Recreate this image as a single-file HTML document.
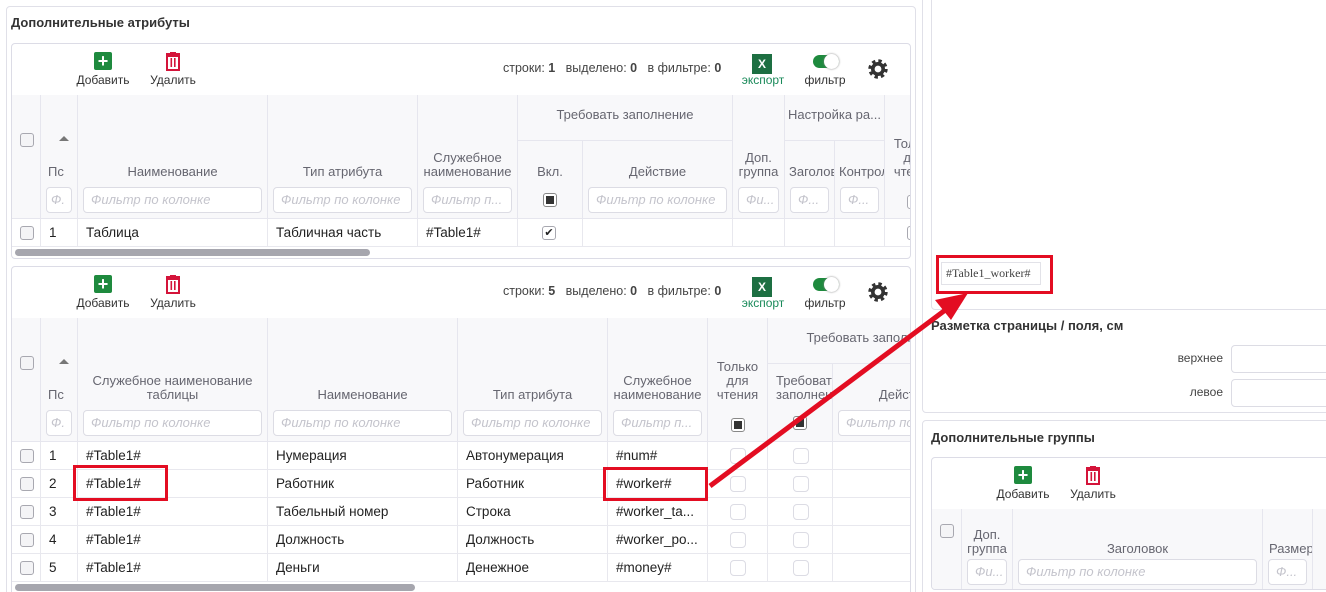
<!DOCTYPE html>
<html><head><meta charset="utf-8"><style>
*{margin:0;padding:0;box-sizing:border-box}
html,body{width:1326px;height:592px;overflow:hidden;background:#fff}
body{font-family:"Liberation Sans","DejaVu Sans",sans-serif;font-size:13px;color:#222}
#w{position:relative;width:1326px;height:592px;overflow:hidden}
.a{position:absolute}
.box{position:absolute;border:1px solid #dcdce6;border-radius:4px;overflow:hidden;background:#fff}
.h{position:absolute;background:#f8f8fa;border-right:1px solid #e6e6ee;border-bottom:1px solid #e6e6ee;overflow:hidden}
.lb{position:absolute;left:0;right:0;bottom:39px;text-align:center;color:#666670;font-size:13px;line-height:14px;white-space:nowrap}
.gl{position:absolute;left:0;right:0;top:0;line-height:40px;text-align:center;color:#666670;white-space:nowrap;overflow:hidden}
.f{position:absolute;left:5px;right:5px;bottom:5px;height:26px;border:1px solid #dcdce4;border-radius:4px;background:#fff;color:#c4c4cc;font-style:italic;font-size:13px;line-height:24px;padding-left:7px;white-space:nowrap;overflow:hidden}
.cb{position:absolute;width:14px;height:14px;border:1px solid #a8a8b0;border-radius:3px;background:#f4f4f6}
.cbf{position:absolute;width:14px;height:14px;border:1px solid #888;border-radius:3px;background:#fff}
.cbf::after{content:"";position:absolute;left:2px;top:2px;width:8px;height:8px;background:#333}
.eb{position:absolute;width:16px;height:16px;border:1px solid #dcdce4;border-radius:4px;background:#fff}
.d{position:absolute;border-right:1px solid #e8e8ee;border-bottom:1px solid #e8e8ee;padding-left:8px;line-height:27px;white-space:nowrap;overflow:hidden;background:#fff;font-size:13.5px}
.tl{position:absolute;width:80px;text-align:center;color:#333;font-size:12px}
.title{position:absolute;font-weight:bold;font-size:13px;color:#333}
.sc{position:absolute;height:7px;border-radius:4px;background:#a6a6ae}
.red{position:absolute;border:3px solid #e30d22}
</style></head><body><div id="w">

<div class="box" style="left:6px;top:6px;width:910px;height:600px;border-color:#e0e0e8"></div>
<div class="title" style="left:11px;top:15px">Дополнительные атрибуты</div>

<!-- TABLE 1 -->
<div class="box" style="left:11px;top:43px;width:900px;height:216px">
 <div class="a" style="left:82px;top:8px;width:18px;height:18px;background:#1e8a3e;border-radius:2px;color:#fff;font-size:18px;line-height:18px;text-align:center;font-weight:bold">+</div>
 <div class="tl" style="left:51px;top:29px">Добавить</div>
 <svg class="a" style="left:152px;top:8px" width="18" height="19" viewBox="0 0 18 19"><rect x="2" y="1" width="14" height="3" fill="#d4143a"/><rect x="6" y="0" width="6" height="2" fill="#d4143a"/><rect x="3" y="4" width="12" height="14" fill="none" stroke="#d4143a" stroke-width="2"/><rect x="6.5" y="6" width="1.6" height="9" fill="#d4143a"/><rect x="10" y="6" width="1.6" height="9" fill="#d4143a"/></svg>
 <div class="tl" style="left:121px;top:29px">Удалить</div>
 <div class="a" style="left:491px;top:17px;color:#444;line-height:14px;font-size:12.5px">строки: <b>1</b> &nbsp; выделено: <b>0</b> &nbsp; в фильтре: <b>0</b></div>
 <div class="a" style="left:740px;top:10px;width:20px;height:20px;background:#1d6f42;color:#fff;font-size:12px;font-weight:bold;line-height:20px;text-align:center">X</div>
 <div class="tl" style="left:711px;top:29px;color:#1a8a5a;font-size:12px">экспорт</div>
 <div class="a" style="left:801px;top:11px;width:26px;height:13px;background:#1e8a3e;border-radius:7px"><div class="a" style="right:0;top:-1px;width:15px;height:15px;background:#fff;border-radius:50%;box-shadow:0 0 2px #888"></div></div>
 <div class="tl" style="left:773px;top:29px">фильтр</div>
 <svg class="a" style="left:856px;top:15px" width="20" height="20" viewBox="0 0 20 20"><circle cx="10" cy="10" r="8" fill="none" stroke="#333" stroke-width="3.4" stroke-dasharray="3.3 3"/><circle cx="10" cy="10" r="5.2" fill="none" stroke="#333" stroke-width="3.6"/></svg>

 <div class="h" style="left:0;top:51px;width:29px;height:124px"><div class="cb" style="left:8px;top:38px"></div></div>
 <div class="h" style="left:29px;top:51px;width:37px;height:124px"><div class="a" style="left:18px;top:41px;border-left:5px solid transparent;border-right:5px solid transparent;border-bottom:5px solid #777"></div><div class="lb" style="text-align:left;left:7px">Пс</div><div class="f" style="padding-left:4px">Ф.</div></div>
 <div class="h" style="left:66px;top:51px;width:190px;height:124px"><div class="lb">Наименование</div><div class="f">Фильтр по колонке</div></div>
 <div class="h" style="left:256px;top:51px;width:150px;height:124px"><div class="lb">Тип атрибута</div><div class="f">Фильтр по колонке</div></div>
 <div class="h" style="left:406px;top:51px;width:100px;height:124px"><div class="lb">Служебное<br>наименование</div><div class="f">Фильтр п...</div></div>
 <div class="h" style="left:506px;top:51px;width:215px;height:46px"><div class="gl">Требовать заполнение</div></div>
 <div class="h" style="left:506px;top:97px;width:65px;height:78px"><div class="lb">Вкл.</div><div class="cbf" style="left:25px;top:52px"></div></div>
 <div class="h" style="left:571px;top:97px;width:150px;height:78px"><div class="lb">Действие</div><div class="f">Фильтр по колонке</div></div>
 <div class="h" style="left:721px;top:51px;width:52px;height:124px"><div class="lb">Доп.<br>группа</div><div class="f">Фи...</div></div>
 <div class="h" style="left:773px;top:51px;width:100px;height:46px"><div class="gl">Настройка ра...</div></div>
 <div class="h" style="left:773px;top:97px;width:50px;height:78px"><div class="lb" style="text-align:left;left:4px">Заголов</div><div class="f">Ф...</div></div>
 <div class="h" style="left:823px;top:97px;width:50px;height:78px"><div class="lb" style="text-align:left;left:4px">Контрол</div><div class="f">Ф...</div></div>
 <div class="h" style="left:873px;top:51px;width:60px;height:124px"><div class="lb">Только<br>для<br>чтения</div><div class="cb" style="left:22px;top:100px;background:#fff"></div></div>

 <div class="d" style="left:0;top:175px;width:29px;height:28px"><div class="cb" style="left:8px;top:7px"></div></div>
 <div class="d" style="left:29px;top:175px;width:37px;height:28px">1</div>
 <div class="d" style="left:66px;top:175px;width:190px;height:28px">Таблица</div>
 <div class="d" style="left:256px;top:175px;width:150px;height:28px">Табличная часть</div>
 <div class="d" style="left:406px;top:175px;width:100px;height:28px">#Table1#</div>
 <div class="d" style="left:506px;top:175px;width:65px;height:28px"><div class="cb" style="left:24px;top:7px;background:#fff;font-size:11px;line-height:12px;text-align:center;color:#222">✔</div></div>
 <div class="d" style="left:571px;top:175px;width:150px;height:28px"></div>
 <div class="d" style="left:721px;top:175px;width:52px;height:28px"></div>
 <div class="d" style="left:773px;top:175px;width:50px;height:28px"></div>
 <div class="d" style="left:823px;top:175px;width:50px;height:28px"></div>
 <div class="d" style="left:873px;top:175px;width:60px;height:28px"><div class="cb" style="left:22px;top:7px;background:#fff"></div></div>
 <div class="sc" style="left:3px;top:205px;width:355px"></div>
</div>

<!-- TABLE 2 -->
<div class="box" style="left:11px;top:266px;width:900px;height:340px">
 <div class="a" style="left:82px;top:8px;width:18px;height:18px;background:#1e8a3e;border-radius:2px;color:#fff;font-size:18px;line-height:18px;text-align:center;font-weight:bold">+</div>
 <div class="tl" style="left:51px;top:29px">Добавить</div>
 <svg class="a" style="left:152px;top:8px" width="18" height="19" viewBox="0 0 18 19"><rect x="2" y="1" width="14" height="3" fill="#d4143a"/><rect x="6" y="0" width="6" height="2" fill="#d4143a"/><rect x="3" y="4" width="12" height="14" fill="none" stroke="#d4143a" stroke-width="2"/><rect x="6.5" y="6" width="1.6" height="9" fill="#d4143a"/><rect x="10" y="6" width="1.6" height="9" fill="#d4143a"/></svg>
 <div class="tl" style="left:121px;top:29px">Удалить</div>
 <div class="a" style="left:491px;top:17px;color:#444;line-height:14px;font-size:12.5px">строки: <b>5</b> &nbsp; выделено: <b>0</b> &nbsp; в фильтре: <b>0</b></div>
 <div class="a" style="left:740px;top:10px;width:20px;height:20px;background:#1d6f42;color:#fff;font-size:12px;font-weight:bold;line-height:20px;text-align:center">X</div>
 <div class="tl" style="left:711px;top:29px;color:#1a8a5a;font-size:12px">экспорт</div>
 <div class="a" style="left:801px;top:11px;width:26px;height:13px;background:#1e8a3e;border-radius:7px"><div class="a" style="right:0;top:-1px;width:15px;height:15px;background:#fff;border-radius:50%;box-shadow:0 0 2px #888"></div></div>
 <div class="tl" style="left:773px;top:29px">фильтр</div>
 <svg class="a" style="left:856px;top:15px" width="20" height="20" viewBox="0 0 20 20"><circle cx="10" cy="10" r="8" fill="none" stroke="#333" stroke-width="3.4" stroke-dasharray="3.3 3"/><circle cx="10" cy="10" r="5.2" fill="none" stroke="#333" stroke-width="3.6"/></svg>

 <div class="h" style="left:0;top:51px;width:29px;height:124px"><div class="cb" style="left:8px;top:38px"></div></div>
 <div class="h" style="left:29px;top:51px;width:37px;height:124px"><div class="a" style="left:18px;top:41px;border-left:5px solid transparent;border-right:5px solid transparent;border-bottom:5px solid #777"></div><div class="lb" style="text-align:left;left:7px">Пс</div><div class="f" style="padding-left:4px">Ф.</div></div>
 <div class="h" style="left:66px;top:51px;width:190px;height:124px"><div class="lb">Служебное наименование<br>таблицы</div><div class="f">Фильтр по колонке</div></div>
 <div class="h" style="left:256px;top:51px;width:190px;height:124px"><div class="lb">Наименование</div><div class="f">Фильтр по колонке</div></div>
 <div class="h" style="left:446px;top:51px;width:150px;height:124px"><div class="lb">Тип атрибута</div><div class="f">Фильтр по колонке</div></div>
 <div class="h" style="left:596px;top:51px;width:100px;height:124px"><div class="lb">Служебное<br>наименование</div><div class="f">Фильтр п...</div></div>
 <div class="h" style="left:696px;top:51px;width:60px;height:124px"><div class="lb">Только<br>для<br>чтения</div><div class="cbf" style="left:23px;top:100px"></div></div>
 <div class="h" style="left:756px;top:51px;width:215px;height:46px"><div class="gl">Требовать заполнение</div></div>
 <div class="h" style="left:756px;top:97px;width:65px;height:78px"><div class="lb" style="text-align:left;left:8px">Требовать<br>заполнение</div><div class="cbf" style="left:25px;top:52px"></div></div>
 <div class="h" style="left:821px;top:97px;width:150px;height:78px"><div class="lb">Действие</div><div class="f">Фильтр по колонке</div></div>

 <div class="d" style="left:0;top:175px;width:29px;height:28px"><div class="cb" style="left:8px;top:7px"></div></div>
 <div class="d" style="left:29px;top:175px;width:37px;height:28px">1</div>
 <div class="d" style="left:66px;top:175px;width:190px;height:28px">#Table1#</div>
 <div class="d" style="left:256px;top:175px;width:190px;height:28px">Нумерация</div>
 <div class="d" style="left:446px;top:175px;width:150px;height:28px">Автонумерация</div>
 <div class="d" style="left:596px;top:175px;width:100px;height:28px">#num#</div>
 <div class="d" style="left:696px;top:175px;width:60px;height:28px"><div class="eb" style="left:22px;top:6px"></div></div>
 <div class="d" style="left:756px;top:175px;width:65px;height:28px"><div class="eb" style="left:25px;top:6px"></div></div>
 <div class="d" style="left:821px;top:175px;width:150px;height:28px"></div>

 <div class="d" style="left:0;top:203px;width:29px;height:28px"><div class="cb" style="left:8px;top:7px"></div></div>
 <div class="d" style="left:29px;top:203px;width:37px;height:28px">2</div>
 <div class="d" style="left:66px;top:203px;width:190px;height:28px">#Table1#</div>
 <div class="d" style="left:256px;top:203px;width:190px;height:28px">Работник</div>
 <div class="d" style="left:446px;top:203px;width:150px;height:28px">Работник</div>
 <div class="d" style="left:596px;top:203px;width:100px;height:28px">#worker#</div>
 <div class="d" style="left:696px;top:203px;width:60px;height:28px"><div class="eb" style="left:22px;top:6px"></div></div>
 <div class="d" style="left:756px;top:203px;width:65px;height:28px"><div class="eb" style="left:25px;top:6px"></div></div>
 <div class="d" style="left:821px;top:203px;width:150px;height:28px"></div>

 <div class="d" style="left:0;top:231px;width:29px;height:28px"><div class="cb" style="left:8px;top:7px"></div></div>
 <div class="d" style="left:29px;top:231px;width:37px;height:28px">3</div>
 <div class="d" style="left:66px;top:231px;width:190px;height:28px">#Table1#</div>
 <div class="d" style="left:256px;top:231px;width:190px;height:28px">Табельный номер</div>
 <div class="d" style="left:446px;top:231px;width:150px;height:28px">Строка</div>
 <div class="d" style="left:596px;top:231px;width:100px;height:28px">#worker_ta...</div>
 <div class="d" style="left:696px;top:231px;width:60px;height:28px"><div class="eb" style="left:22px;top:6px"></div></div>
 <div class="d" style="left:756px;top:231px;width:65px;height:28px"><div class="eb" style="left:25px;top:6px"></div></div>
 <div class="d" style="left:821px;top:231px;width:150px;height:28px"></div>

 <div class="d" style="left:0;top:259px;width:29px;height:28px"><div class="cb" style="left:8px;top:7px"></div></div>
 <div class="d" style="left:29px;top:259px;width:37px;height:28px">4</div>
 <div class="d" style="left:66px;top:259px;width:190px;height:28px">#Table1#</div>
 <div class="d" style="left:256px;top:259px;width:190px;height:28px">Должность</div>
 <div class="d" style="left:446px;top:259px;width:150px;height:28px">Должность</div>
 <div class="d" style="left:596px;top:259px;width:100px;height:28px">#worker_po...</div>
 <div class="d" style="left:696px;top:259px;width:60px;height:28px"><div class="eb" style="left:22px;top:6px"></div></div>
 <div class="d" style="left:756px;top:259px;width:65px;height:28px"><div class="eb" style="left:25px;top:6px"></div></div>
 <div class="d" style="left:821px;top:259px;width:150px;height:28px"></div>

 <div class="d" style="left:0;top:287px;width:29px;height:28px"><div class="cb" style="left:8px;top:7px"></div></div>
 <div class="d" style="left:29px;top:287px;width:37px;height:28px">5</div>
 <div class="d" style="left:66px;top:287px;width:190px;height:28px">#Table1#</div>
 <div class="d" style="left:256px;top:287px;width:190px;height:28px">Деньги</div>
 <div class="d" style="left:446px;top:287px;width:150px;height:28px">Денежное</div>
 <div class="d" style="left:596px;top:287px;width:100px;height:28px">#money#</div>
 <div class="d" style="left:696px;top:287px;width:60px;height:28px"><div class="eb" style="left:22px;top:6px"></div></div>
 <div class="d" style="left:756px;top:287px;width:65px;height:28px"><div class="eb" style="left:25px;top:6px"></div></div>
 <div class="d" style="left:821px;top:287px;width:150px;height:28px"></div>
 <div class="sc" style="left:3px;top:317px;width:400px"></div>
</div>

<!-- RIGHT SIDE -->
<div class="box" style="left:922px;top:-5px;width:420px;height:418px;border-color:#e0e0e8;background:transparent"></div>
<div class="box" style="left:931px;top:-5px;width:410px;height:315px;border-color:#e0e0e8;background:transparent"></div>
<div class="a" style="left:941px;top:262px;width:100px;height:23px;border:1px solid #e2e2e8;font-family:'Liberation Serif',serif;font-size:12px;line-height:21px;padding-left:4px;color:#444">#Table1_worker#</div>
<div class="red" style="left:936px;top:255px;width:117px;height:39px"></div>
<div class="title" style="left:931px;top:318px">Разметка страницы / поля, см</div>
<div class="a" style="left:1140px;top:351px;width:83px;text-align:right;color:#444;font-size:12px">верхнее</div>
<div class="a" style="left:1231px;top:345px;width:110px;height:28px;border:1px solid #dcdce4;border-radius:4px"></div>
<div class="a" style="left:1140px;top:385px;width:83px;text-align:right;color:#444;font-size:12px">левое</div>
<div class="a" style="left:1231px;top:379px;width:110px;height:28px;border:1px solid #dcdce4;border-radius:4px"></div>

<div class="box" style="left:922px;top:420px;width:420px;height:200px;border-color:#e0e0e8;background:transparent"></div>
<div class="title" style="left:931px;top:430px">Дополнительные группы</div>
<div class="box" style="left:931px;top:457px;width:410px;height:133px">
 <div class="a" style="left:82px;top:8px;width:18px;height:18px;background:#1e8a3e;border-radius:2px;color:#fff;font-size:18px;line-height:18px;text-align:center;font-weight:bold">+</div>
 <div class="tl" style="left:51px;top:29px">Добавить</div>
 <svg class="a" style="left:152px;top:8px" width="18" height="19" viewBox="0 0 18 19"><rect x="2" y="1" width="14" height="3" fill="#d4143a"/><rect x="6" y="0" width="6" height="2" fill="#d4143a"/><rect x="3" y="4" width="12" height="14" fill="none" stroke="#d4143a" stroke-width="2"/><rect x="6.5" y="6" width="1.6" height="9" fill="#d4143a"/><rect x="10" y="6" width="1.6" height="9" fill="#d4143a"/></svg>
 <div class="tl" style="left:121px;top:29px">Удалить</div>
 <div class="h" style="left:0;top:51px;width:30px;height:90px"><div class="cb" style="left:8px;top:15px"></div></div>
 <div class="h" style="left:30px;top:51px;width:51px;height:90px"><div class="lb" style="bottom:42px">Доп.<br>группа</div><div class="f" style="bottom:13px">Фи...</div></div>
 <div class="h" style="left:81px;top:51px;width:250px;height:90px"><div class="lb" style="bottom:42px">Заголовок</div><div class="f" style="bottom:13px">Фильтр по колонке</div></div>
 <div class="h" style="left:331px;top:51px;width:50px;height:90px"><div class="lb" style="bottom:42px;text-align:left;left:6px">Размер</div><div class="f" style="bottom:13px">Ф...</div></div>
 <div class="h" style="left:381px;top:51px;width:40px;height:90px"></div>
</div>

<div class="red" style="left:73px;top:465px;width:95px;height:36px"></div>
<div class="red" style="left:603px;top:467px;width:105px;height:34px"></div>
<svg class="a" style="left:0;top:0" width="1326" height="592">
 <line x1="710" y1="486" x2="948" y2="308" stroke="#e30d22" stroke-width="5"/>
 <polygon points="968,293 951,320 935,300" fill="#e30d22"/>
</svg>
</div></body></html>
